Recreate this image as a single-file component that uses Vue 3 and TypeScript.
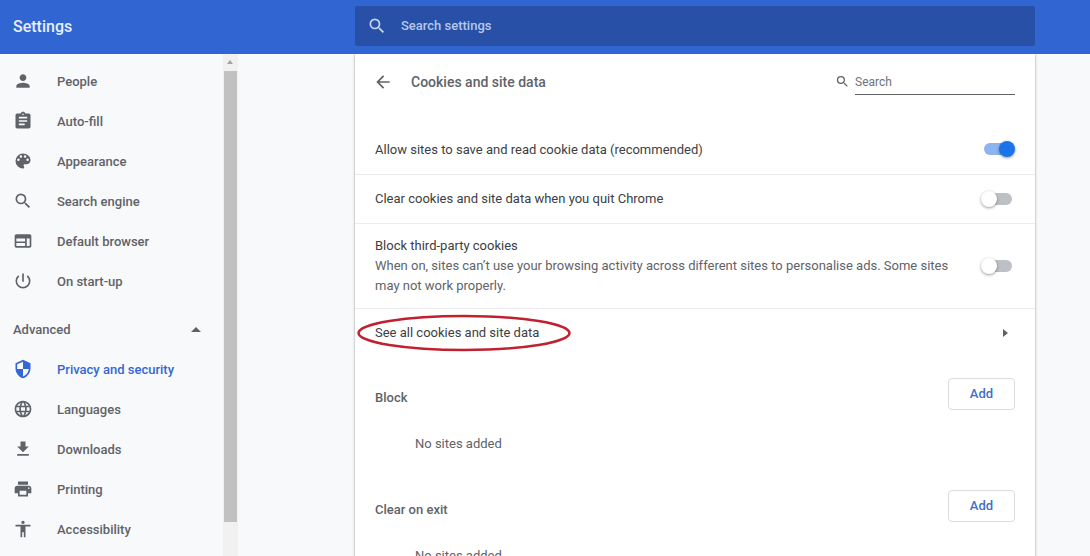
<script setup lang="ts">
interface NavItem { label: string; path: string; active?: boolean }
const basic: NavItem[] = [
  { label: 'People', path: 'M12 12c2.2 0 4-1.8 4-4s-1.800-4-4-4-4 1.800-4 4 1.800 4 4 4zm0 2c-2.700 0-8 1.300-8 4v2h16v-2c0-2.700-5.300-4-8-4z' },
  { label: 'Auto-fill', path: 'M19 3h-4.200C14.400 1.800 13.300 1 12 1s-2.400.8-2.800 2H5c-1.100 0-2 .9-2 2v14c0 1.100.9 2 2 2h14c1.100 0 2-.9 2-2V5c0-1.100-.9-2-2-2zm-7 0c.55 0 1 .45 1 1s-.45 1-1 1-1-.45-1-1 .45-1 1-1zm2 14H7v-2h7v2zm3-4H7v-2h10v2zm0-4H7V7h10v2z' },
  { label: 'Appearance', path: 'M12 3a9 9 0 0 0 0 18c.83 0 1.500-.67 1.500-1.500 0-.39-.15-.74-.39-1.010-.23-.26-.38-.61-.38-.99 0-.83.67-1.500 1.500-1.500H16c2.760 0 5-2.240 5-5 0-4.420-4.030-8-9-8zm-5.500 9a1.500 1.500 0 1 1 0-3 1.500 1.500 0 0 1 0 3zm3-4a1.500 1.500 0 1 1 0-3 1.500 1.500 0 0 1 0 3zm5 0a1.500 1.500 0 1 1 0-3 1.500 1.500 0 0 1 0 3zm3 4a1.500 1.500 0 1 1 0-3 1.500 1.500 0 0 1 0 3z' },
  { label: 'Search engine', path: 'M15.500 14h-.79l-.28-.27A6.470 6.470 0 0 0 16 9.500 6.500 6.500 0 1 0 9.500 16c1.610 0 3.090-.59 4.230-1.570l.27.28v.79l5 4.990L20.490 19l-4.990-5zm-6 0C7.010 14 5 11.990 5 9.500S7.010 5 9.500 5 14 7.010 14 9.500 11.990 14 9.500 14z' },
  { label: 'Default browser', path: 'M20 4H4c-1.100 0-2 .9-2 2v12c0 1.100.9 2 2 2h16c1.100 0 2-.9 2-2V6c0-1.100-.9-2-2-2zM4 9h10.500v3.500H4V9zm0 5.500h10.500V18H4v-3.500zM20 18h-3.500V9H20v9z' },
  { label: 'On start-up', path: 'M13 3h-2v10h2V3zm4.830 2.170l-1.420 1.420A6.920 6.920 0 0 1 19 12c0 3.870-3.130 7-7 7s-7-3.130-7-7c0-2.190 1.010-4.140 2.580-5.420L6.170 5.170A8.932 8.932 0 0 0 3 12a9 9 0 0 0 18 0c0-2.740-1.230-5.190-3.170-6.830z' },
]
const advanced: NavItem[] = [
  { label: 'Privacy and security', active: true, path: 'M12 1L3 5v6c0 5.550 3.840 10.740 9 12 5.160-1.260 9-6.450 9-12V5l-9-4zm0 10.990h7c-.53 4.120-3.280 7.790-7 8.940V12H5V6.300l7-3.110v8.800z' },
  { label: 'Languages', path: 'M11.990 2C6.470 2 2 6.480 2 12s4.470 10 9.990 10C17.520 22 22 17.520 22 12S17.520 2 11.990 2zm6.930 6h-2.950a15.650 15.650 0 0 0-1.380-3.560A8.030 8.030 0 0 1 18.920 8zM12 4.040c.83 1.200 1.480 2.530 1.910 3.960h-3.820c.43-1.430 1.080-2.760 1.910-3.960zM4.260 14C4.100 13.360 4 12.690 4 12s.1-1.360.26-2h3.380c-.08.66-.14 1.320-.14 2 0 .68.06 1.340.14 2H4.260zm.82 2h2.950c.32 1.250.78 2.450 1.380 3.560A7.987 7.987 0 0 1 5.080 16zm2.950-8H5.080a7.987 7.987 0 0 1 4.330-3.560A15.650 15.650 0 0 0 8.030 8zM12 19.960c-.83-1.200-1.480-2.530-1.910-3.960h3.820c-.43 1.430-1.080 2.760-1.910 3.960zM14.340 14H9.660c-.09-.66-.16-1.320-.16-2 0-.68.07-1.350.16-2h4.680c.09.650.16 1.320.16 2 0 .68-.07 1.340-.16 2zm.25 5.560c.6-1.110 1.060-2.310 1.380-3.560h2.950a8.030 8.030 0 0 1-4.330 3.560zM16.360 14c.08-.66.14-1.320.14-2 0-.68-.06-1.340-.14-2h3.380c.16.640.26 1.310.26 2s-.1 1.360-.26 2h-3.380z' },
  { label: 'Downloads', path: 'M19 9h-4V3H9v6H5l7 7 7-7zM5 18v2h14v-2H5z' },
  { label: 'Printing', path: 'M19 8H5c-1.660 0-3 1.340-3 3v6h4v4h12v-4h4v-6c0-1.660-1.340-3-3-3zm-3 11H8v-5h8v5zm3-7c-.55 0-1-.45-1-1s.45-1 1-1 1 .45 1 1-.45 1-1 1zm-1-9H6v4h12V3z' },
  { label: 'Accessibility', path: 'M12 2c1.100 0 2 .9 2 2s-.9 2-2 2-2-.9-2-2 .9-2 2-2zm9 7h-6v13h-2v-6h-2v6H9V9H3V7h18v2z' },
]
</script>

<template>
  <div class="page">
    <header class="topbar">
      <div class="brand">Settings</div>
      <div class="main-search">
        <svg class="main-search-icon" viewBox="0 0 24 24" width="20" height="20"><path fill="currentColor" d="M15.500 14h-.79l-.28-.27A6.470 6.470 0 0 0 16 9.500 6.500 6.500 0 1 0 9.500 16c1.610 0 3.090-.59 4.230-1.570l.27.28v.79l5 4.990L20.490 19l-4.990-5zm-6 0C7.010 14 5 11.990 5 9.500S7.010 5 9.500 5 14 7.010 14 9.500 11.990 14 9.500 14z"/></svg>
        <span class="main-search-text">Search settings</span>
      </div>
    </header>

    <div class="body">
      <nav class="sidebar">
        <ul class="nav">
          <li v-for="item in basic" :key="item.label" class="nav-item">
            <svg viewBox="0 0 24 24" width="20" height="20"><path fill="currentColor" :d="item.path"/></svg>
            <span>{{ item.label }}</span>
          </li>
        </ul>
        <div class="adv">
          <span>Advanced</span>
          <i class="tri-up"></i>
        </div>
        <ul class="nav">
          <li v-for="item in advanced" :key="item.label" class="nav-item" :class="{ active: item.active }">
            <svg viewBox="0 0 24 24" width="20" height="20"><path fill="currentColor" :d="item.path"/></svg>
            <span>{{ item.label }}</span>
          </li>
        </ul>
      </nav>

      <div class="scrollbar">
        <i class="scroll-up"></i>
        <div class="thumb"></div>
      </div>

      <main class="content">
        <section class="card">
          <div class="card-head">
            <svg class="back" viewBox="0 0 24 24" width="20" height="20"><path fill="currentColor" d="M20 11H7.830l5.590-5.590L12 4l-8 8 8 8 1.410-1.410L7.830 13H20v-2z"/></svg>
            <h1>Cookies and site data</h1>
            <div class="sub-search">
              <svg viewBox="0 0 24 24" width="15" height="15"><path fill="currentColor" d="M15.500 14h-.79l-.28-.27A6.470 6.470 0 0 0 16 9.500 6.500 6.500 0 1 0 9.500 16c1.610 0 3.090-.59 4.230-1.570l.27.28v.79l5 4.990L20.490 19l-4.990-5zm-6 0C7.010 14 5 11.990 5 9.500S7.010 5 9.500 5 14 7.010 14 9.500 11.990 14 9.500 14z"/></svg>
              <span class="sub-input">Search</span>
            </div>
          </div>

          <div class="row row-first">
            <span class="grow">Allow sites to save and read cookie data (recommended)</span>
            <span class="toggle on"><i></i></span>
          </div>
          <div class="row row-second">
            <span class="grow lift">Clear cookies and site data when you quit Chrome</span>
            <span class="toggle"><i></i></span>
          </div>
          <div class="row row-third">
            <div class="grow">
              <div>Block third-party cookies</div>
              <div class="secondary">When on, sites can’t use your browsing activity across different sites to personalise ads. Some sites may not work properly.</div>
            </div>
            <span class="toggle"><i></i></span>
          </div>
          <div class="row row-link">
            <span class="grow lift">See all cookies and site data</span>
            <i class="tri-right"></i>
          </div>

          <div class="list-head list-block">
            <span class="list-title">Block</span>
            <button class="add" type="button">Add</button>
          </div>
          <div class="empty">No sites added</div>

          <div class="list-head list-clear">
            <span class="list-title">Clear on exit</span>
            <button class="add" type="button">Add</button>
          </div>
          <div class="empty">No sites added</div>
        </section>
      </main>
    </div>

    <svg class="ring" width="220" height="44" viewBox="0 0 220 44">
      <ellipse cx="110" cy="22" rx="105.500" ry="17" fill="none" stroke="#c0202f" stroke-width="2.500"/>
    </svg>
  </div>
</template>

<style>
html, body { margin: 0; padding: 0; overflow: hidden; }
</style>

<style scoped>
.page {
  position: relative;
  width: 1090px;
  height: 556px;
  overflow: hidden;
  background: #f8f9fb;
  font-family: Roboto, "Liberation Sans", sans-serif;
  font-size: 13px;
  color: #3c4043;
}
.topbar {
  height: 54px;
  background: #3065d2;
  display: flex;
  align-items: center;
  position: relative;
  z-index: 2;
}
.brand {
  width: 355px;
  box-sizing: border-box;
  padding-left: 13px;
  color: #e8f0fe;
  font-size: 16px;
  font-weight: 500;
  margin-top: -1px;
}
.main-search {
  width: 680px;
  height: 40px;
  margin-top: -2px;
  background: #2750a6;
  border-radius: 2px;
  display: flex;
  align-items: center;
  color: #b5c9ee;
  font-size: 13px;
  font-weight: 500;
}
.main-search-icon { margin: 0 14px 0 12px; color: #c6d6f4; }
.main-search-text { margin-bottom: 2px; }
.body { display: flex; height: 502px; }
.sidebar { width: 223px; flex: none; padding-top: 7px; box-sizing: border-box; }
.nav { list-style: none; margin: 0; padding: 0; }
.nav-item {
  height: 40px;
  display: flex;
  align-items: center;
  padding-left: 13px;
  color: #5f6368;
  font-weight: 500;
}
.nav-item svg { margin-right: 24px; flex: none; }
.nav-item.active { color: #3367d6; }
.adv {
  height: 48px;
  display: flex;
  align-items: center;
  justify-content: space-between;
  padding: 8px 22px 0 13px;
  box-sizing: border-box;
  color: #5f6368;
  font-weight: 500;
}
.tri-up {
  width: 0;
  height: 0;
  border-left: 5px solid transparent;
  border-right: 5px solid transparent;
  border-bottom: 5px solid #5f6368;
}
.scrollbar {
  width: 15px;
  flex: none;
  background: #f1f1f1;
  position: relative;
  padding-top: 17px;
  box-sizing: border-box;
}
.scroll-up {
  position: absolute;
  top: 6px;
  left: 4px;
  width: 0;
  height: 0;
  border-left: 3.500px solid transparent;
  border-right: 3.500px solid transparent;
  border-bottom: 4px solid #a3a3a3;
}
.thumb { width: 13px; margin-left: 1px; height: 451px; background: #c1c1c1; }
.content { width: 797px; flex: none; padding-left: 117px; box-sizing: border-box; }
.card {
  width: 680px;
  height: 560px;
  background: #fff;
  box-shadow: 0 0 2px rgba(60, 64, 67, .45), 0 1px 3px rgba(60, 64, 67, .15);
}
.card-head {
  height: 56px;
  display: flex;
  align-items: center;
  padding: 0 20px 0 18px;
}
.back { color: #5f6368; margin-right: 18px; flex: none; }
.card-head h1 {
  margin: 0;
  font-size: 14px;
  font-weight: 500;
  color: #5f6368;
  flex: 1;
}
.sub-search { display: flex; align-items: center; color: #5f6368; gap: 5px; }
.sub-search svg { margin-top: -2px; }
.sub-input {
  width: 160px;
  height: 26px;
  line-height: 26px;
  box-sizing: border-box;
  border-bottom: 1px solid #5f6368;
  font-size: 12px;
  color: #6f7378;
}
.row {
  display: flex;
  align-items: center;
  padding: 0 20px;
  border-bottom: 1px solid #ececee;
  box-sizing: border-box;
}
.row-first { height: 65px; padding-top: 14px; }
.row-second { height: 49px; }
.row-third { height: 85px; line-height: 20px; }
.row-link { height: 48px; border-bottom: 0; }
.grow { flex: 1; min-width: 0; }
.lift { margin-bottom: 2px; }
.secondary { color: #5f6368; width: 585px; }
.toggle { position: relative; display: block; width: 30px; height: 12px; border-radius: 6px; background: #bdc1c6; flex: none; margin-right: 3px; }
.toggle i {
  position: absolute;
  left: -1px;
  top: -2px;
  width: 16px;
  height: 16px;
  border-radius: 50%;
  background: #fff;
  box-shadow: 0 1px 3px rgba(0, 0, 0, .4);
}
.toggle.on { background: #8db4f0; margin-right: 1px; }
.toggle.on i { left: auto; right: -1px; background: #1a73e8; }
.tri-right {
  width: 0;
  height: 0;
  margin-right: 7px;
  border-top: 4px solid transparent;
  border-bottom: 4px solid transparent;
  border-left: 5px solid #5f6368;
}
.list-head {
  display: flex;
  align-items: center;
  justify-content: space-between;
  padding: 0 20px;
  color: #5f6368;
  font-weight: 500;
}
.list-title { margin-top: 6px; }
.list-block { margin-top: 21px; }
.list-clear { margin-top: 36px; }
.add {
  width: 67px;
  height: 32px;
  box-sizing: border-box;
  border: 1px solid #dadce0;
  border-radius: 4px;
  background: #fff;
  color: #3f6fc9;
  font-family: inherit;
  font-size: 13px;
  font-weight: 500;
  padding: 0 0 2px;
}
.empty { padding-left: 60px; margin-top: 24px; color: #5f6368; line-height: 20px; }
.ring { position: absolute; left: 354px; top: 311px; pointer-events: none; }
</style>
